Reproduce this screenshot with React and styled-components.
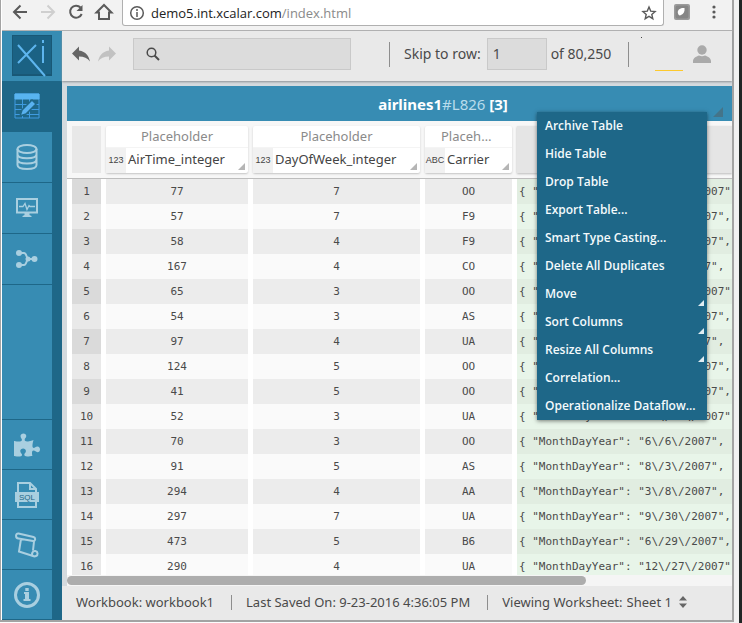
import React from "react";
import styled, { createGlobalStyle, css } from "styled-components";
import { FaPuzzlePiece } from "react-icons/fa";

const blue = "#378cb3";
const darkBlue = "#1e6788";
const ui = '"Noto Sans", "Open Sans", sans-serif';
const mono = '"DejaVu Sans Mono", "Liberation Mono", monospace';

const GlobalStyle = createGlobalStyle`
  *, *::before, *::after { box-sizing: border-box; }
  body { margin: 0; background: #fdfdfd; color: #4a4a4a; font: 13px/20px ${ui}; }
  button, input, select { font: inherit; color: inherit; margin: 0; padding: 0; border: 0; background: none; }
  svg { display: block; flex: none; }
`;

const Desktop = styled.div`
  display: flex;
  height: 100vh;
  overflow: hidden;
  background: #202625;
`;
const Window = styled.div`
  flex: 1;
  min-width: 0;
  display: flex;
  flex-direction: column;
  margin-right: 3px;
  padding: 0 5px 1px 0;
  background: linear-gradient(to right, #fdfdfd 60%, #f1f1f1);
`;
const Frame = styled.div`
  flex: 1;
  min-height: 0;
  display: flex;
  flex-direction: column;
  border: solid #a3a3a3;
  border-width: 0 2px 2px 1px;
  padding-left: 1px;
  background: #fff;
`;

const BrowserBar = styled.header`
  flex: none;
  display: flex;
  align-items: flex-start;
  height: 31px;
  background: #f2f2f2;
  border-bottom: 1px solid #b3b3b3;
  color: #5a5a5a;
`;
const BrowserButtons = styled.div`
  display: flex;
  gap: 8px;
  padding: 2px 8px 0 8px;
`;
const BrowserButton = styled.button`
  width: 20px;
  height: 20px;
  color: ${(p) => (p.disabled ? "#cfcfcf" : "#5a5a5a")};
`;
const AddressBar = styled.div`
  flex: 1;
  display: flex;
  align-items: center;
  gap: 6px;
  height: 26px;
  padding: 0 6px;
  background: #fff;
  border: solid #b0b0b0;
  border-width: 0 1px 1px;
  border-radius: 0 0 3px 3px;
`;
const Url = styled.span`
  flex: 1;
  font-family: "Open Sans", sans-serif;
  color: #8a8a8a;
  b { font-weight: 400; color: #222; }
`;
const Extensions = styled.div`
  display: flex;
  align-items: center;
  gap: 14px;
  height: 24px;
  padding: 0 8px 0 10px;
`;

const AppShell = styled.div`
  flex: 1;
  min-height: 0;
  display: flex;
`;
const Sidebar = styled.nav`
  flex: none;
  width: 60px;
  display: flex;
  flex-direction: column;
  background: linear-gradient(to right, ${blue} 50px, ${darkBlue} 50px);
`;
const Logo = styled.div`
  height: 50px;
  padding: 4px 10px;
  background: ${blue};
`;
const Tab = styled.button`
  display: flex;
  align-items: center;
  justify-content: center;
  height: ${(p) => (p.$compact ? 50 : 51)}px;
  padding-right: 10px;
  color: #a9cfe0;
  border-bottom: 1px solid ${darkBlue};
  ${(p) => p.$active && css`background: ${darkBlue}; color: #58b4f0;`}
`;
const TabGroup = styled.div`
  display: flex;
  flex-direction: column;
  ${(p) => p.$bottom && css`margin-top: auto; border-top: 1px solid ${darkBlue};`}
`;

const Content = styled.div`
  flex: 1;
  min-width: 0;
  display: flex;
  flex-direction: column;
  background: #d4dade;
`;
const TopBar = styled.div`
  flex: none;
  display: flex;
  align-items: center;
  height: 50px;
  padding: 0 21px 4px 10px;
  font-size: 14px;
  background: #e9e9e9;
  box-shadow: 0 1px 2px #8d9296;
  white-space: nowrap;
`;
const History = styled.div`
  display: flex;
  gap: 8px;
  margin-right: 17px;
`;
const HistoryButton = styled.button`
  height: 16px;
  color: ${(p) => (p.disabled ? "#c2c2c2" : "#666")};
`;
const Field = styled.div`
  display: flex;
  align-items: center;
  width: ${(p) => p.$width}px;
  height: 32px;
  padding: 0 5px;
  background: #dcdcdc;
  border: 1px solid #c9c9c9;
  input { flex: 1; min-width: 0; outline: 0; }
`;
const SearchField = styled(Field)`
  gap: 10px;
  padding-left: 12px;
`;
const Divider = styled.span`
  width: 1px;
  height: ${(p) => p.$height}px;
  margin: 0 14px 0 17px;
  background: #8e8e8e;
`;
const SkipForm = styled.div`
  display: flex;
  align-items: center;
  gap: 4px;
  padding-left: 38px;
  label {
    display: flex;
    align-items: center;
    gap: 14px;
    margin-right: 2px;
  }
  label::before {
    content: "";
    width: 1px;
    height: 25px;
    background: #8e8e8e;
  }
`;
const Gauge = styled.div`
  position: relative;
  width: 28px;
  height: 34px;
  margin-left: 12px;
  border-bottom: 1px solid #fdc92d;
  &::before {
    content: "";
    position: absolute;
    left: -14px;
    top: 0;
    width: 1px;
    height: 1px;
    background: #444;
  }
`;
const UserButton = styled.button`
  margin-left: auto;
  color: #aaa;
`;

const TablePanel = styled.section`
  flex: 1;
  min-height: 0;
  display: flex;
  flex-direction: column;
  margin: 5px 0 0 5px;
`;
const TitleBar = styled.div`
  position: relative;
  flex: none;
  z-index: 1;
  height: 35px;
  padding-left: 87px;
  text-align: center;
  font-size: 15px;
  line-height: 37px;
  color: #fff;
  background: ${blue};
  span { color: #b9dcec; }
`;
const Corner = styled.button`
  position: absolute;
  right: ${(p) => p.$inset}px;
  bottom: ${(p) => p.$bottom}px;
  width: ${(p) => p.$size}px;
  height: ${(p) => p.$size}px;
  background: ${(p) => p.$color};
  clip-path: polygon(100% 0, 100% 100%, 0 100%);
`;
const Menu = styled.ul`
  position: absolute;
  top: 26px;
  right: 25px;
  width: 170px;
  margin: 0;
  padding: 0;
  list-style: none;
  background: ${darkBlue};
  box-shadow: 0 1px 4px rgba(0, 0, 0, 0.5);
`;
const MenuItem = styled.li`
  position: relative;
  height: 28px;
  button:first-child {
    display: block;
    width: 100%;
    height: 28px;
    padding-left: 8px;
    text-align: left;
    font-family: "Open Sans", sans-serif;
    font-size: 12px;
    line-height: 28px;
    font-weight: 600;
    color: #f4fafc;
    white-space: nowrap;
  }
`;

const TableViewport = styled.div`
  flex: 1;
  min-height: 0;
  overflow: hidden;
  background: #fff;
`;
const DataTable = styled.table`
  table-layout: fixed;
  width: 100%;
  min-width: 665px;
  border-collapse: separate;
  border-spacing: 0;
`;
const Column = styled.col`
  width: ${(p) => (p.$width ? p.$width + "px" : "auto")};
`;
const HeadCell = styled.th`
  height: 58px;
  padding: ${(p) => (p.$first ? "5px 5px 5px 5px" : p.$last ? "5px 0" : "5px 5px 5px 0")};
  vertical-align: top;
  font-weight: 400;
  background: #f7f7f7;
  border-bottom: 1px solid #bdbdbd;
`;
const HeadBlank = styled.div`
  height: 47px;
  background: #e8e8e8;
  ${(p) => p.$raised && css`box-shadow: 0 1px 2px #bbb; background: #e5e5e5;`}
`;
const ColumnHead = styled.div`
  position: relative;
  background: #fff;
  border-radius: 2px;
  box-shadow: 0 1px 2px #c4c4c4;
`;
const Prefix = styled.div`
  height: 21px;
  line-height: 21px;
  padding: 0 16px;
  overflow: hidden;
  text-overflow: ellipsis;
  white-space: nowrap;
  color: #8a8a8a;
`;
const ColumnName = styled.div`
  display: flex;
  height: 26px;
  line-height: 22px;
  color: #444;
  border-top: 1px solid #f4f4f4;
`;
const TypeTag = styled.span`
  width: 20px;
  margin-right: 2px;
  text-align: center;
  font-family: "Liberation Sans", sans-serif;
  font-size: 9px;
  line-height: 25px;
  background: #f1f1f1;
`;

const Row = styled.tr`
  td, th { background: ${(p) => (p.$odd ? "#ececec" : "#fafafa")}; }
  th { background: ${(p) => (p.$odd ? "#dadada" : "#e9e9e9")}; }
  td:last-child { background: ${(p) => (p.$odd ? "#e1ede1" : "#e8f5e9")}; }
`;
const cell = css`
  height: 25px;
  padding: 0;
  line-height: 25px;
  font-family: ${mono};
  font-size: 11px;
  font-weight: 400;
  text-align: center;
  border-right: 5px solid #fff;
`;
const RowNumber = styled.th`
  ${cell}
  border-left: 5px solid #fff;
`;
const Cell = styled.td`${cell}`;
const JsonCell = styled.td`
  ${cell}
  padding-left: 2px;
  text-align: left;
  white-space: pre;
  overflow: hidden;
  border-right: 0;
`;

const ScrollTrack = styled.div`
  flex: none;
  height: 11px;
  padding: 1px 0;
  background: #f5f5f5;
`;
const ScrollThumb = styled.div`
  width: 78%;
  height: 9px;
  border-radius: 5px;
  background: #adadad;
`;
const StatusBar = styled.footer`
  flex: none;
  display: flex;
  align-items: center;
  height: 34px;
  padding: 0 0 2px 14px;
  background: #e9e9e9;
  white-space: nowrap;
`;
const SheetPicker = styled.label`
  display: flex;
  align-items: center;
  gap: 4px;
  select { appearance: none; width: 48px; }
`;

const stroke = (w) => ({ fill: "none", stroke: "currentColor", strokeWidth: w });

const BackIcon = ({ flip }) => (
  <svg width="20" height="20" viewBox="0 0 20 20" {...stroke(2)} transform={flip ? "scale(-1 1)" : undefined}>
    <path d="M17 10H4M10.500 3.500L4 10l6.500 6.500" />
  </svg>
);
const ReloadIcon = () => (
  <svg width="20" height="20" viewBox="0 0 20 20" {...stroke(2)}>
    <path d="M14.500 5.500A6 6 0 1 0 15.700 12" />
    <path d="M16.500 3v6h-6z" fill="currentColor" stroke="none" />
  </svg>
);
const HomeIcon = () => (
  <svg width="20" height="20" viewBox="0 0 20 20" {...stroke(2)}>
    <path d="M2.500 10.500L10 3l7.500 7.500H15V17H5v-6.500z" />
  </svg>
);
const InfoIcon = () => (
  <svg width="16" height="16" viewBox="0 0 16 16" {...stroke(1.5)}>
    <circle cx="8" cy="8" r="6.300" />
    <path d="M8 7v5M8 4v2" />
  </svg>
);
const StarIcon = () => (
  <svg width="16" height="16" viewBox="0 0 16 16" {...stroke(1.4)}>
    <path d="M8 2l1.700 4.100 4.400.4-3.300 2.900 1 4.300L8 11.400l-3.800 2.300 1-4.300-3.300-2.900 4.400-.4z" />
  </svg>
);
const ExtensionIcon = () => (
  <svg width="16" height="16" viewBox="0 0 16 16">
    <rect width="16" height="16" rx="2" fill="#9b9b9b" />
    <rect x="1.500" y="1.500" width="13" height="13" rx="2" fill="#868686" />
    <path d="M10.500 4C6 3.500 3 6 4 9.500c.5 2 2 2.500 3 1.500 2.500-1 4-3.500 3.500-7z" fill="#fff" />
  </svg>
);
const DotsIcon = () => (
  <svg width="20" height="16" viewBox="0 0 20 16" fill="#5a5a5a">
    <circle cx="10" cy="3" r="1.600" /><circle cx="10" cy="8" r="1.600" /><circle cx="10" cy="13" r="1.600" />
  </svg>
);
const LogoIcon = () => (
  <svg width="40" height="42" viewBox="0 0 40 42" fill="none" stroke="#5eb5ee" strokeWidth="2">
    <rect width="40" height="40" fill="#1b6284" stroke="#195876" />
    <path d="M6 10l27 31M24 10L6 28M31 11v17M31 5v3" />
  </svg>
);
const TableIcon = () => (
  <svg width="26" height="26" viewBox="0 0 26 26" {...stroke(1)}>
    <path d="M1 1h24v24H1zM8.500 6v19M15.500 6v19M1 11.500h24M1 16.500h24M1 21.500h24" stroke="#3f9be0" />
    <path d="M1 1h24v5H1z" fill="currentColor" />
    <path d="M6 23l2-6L18 7l4 4-10 10z" fill="#59b1ef" stroke={darkBlue} strokeWidth="1.500" />
  </svg>
);
const DatabaseIcon = () => (
  <svg width="22" height="26" viewBox="0 0 22 26" {...stroke(2)}>
    <ellipse cx="11" cy="5" rx="9.500" ry="4" />
    <path d="M1.500 5v16c0 5.300 19 5.300 19 0V5M1.500 10.300c0 5.300 19 5.300 19 0M1.500 15.600c0 5.300 19 5.300 19 0" />
  </svg>
);
const MonitorIcon = () => (
  <svg width="22" height="20" viewBox="0 0 22 20" {...stroke(2)}>
    <path d="M1 1h20v13.500H1z" />
    <path d="M3 8.500h4l2-3 2 6 2-4 1 1h5" strokeWidth="1.300" />
    <path d="M8.500 15h5v2l2 1v1h-9v-1l2-1z" fill="currentColor" stroke="none" />
  </svg>
);
const FlowIcon = () => (
  <svg width="22" height="18" viewBox="0 0 22 18" {...stroke(2)}>
    <path d="M3 3h5c3 0 2 6 5 6h6M3 15h5c3 0 2-6 5-6" />
    <g fill="currentColor" stroke="none">
      <circle cx="3" cy="3" r="3" /><circle cx="3" cy="15" r="3" /><circle cx="12" cy="9" r="2.500" /><circle cx="18.500" cy="9" r="3" />
    </g>
  </svg>
);
const SqlIcon = () => (
  <svg width="24" height="26" viewBox="0 0 24 26">
    <path d="M3 10V1h12l6 6v3M3 20v5h18v-5M15 1v6h6" {...stroke(2)} />
    <rect y="10" width="24" height="10" fill="currentColor" />
    <text x="12" y="18" textAnchor="middle" fontFamily="Liberation Sans" fontSize="8" fill={darkBlue}>SQL</text>
  </svg>
);
const ScrollIcon = () => (
  <svg width="24" height="26" viewBox="0 0 24 26" {...stroke(2)}>
    <path d="M3.500 1.500l15 3.500c2.500.8 2 4.500-.5 4L3.500 6.500C0 6 .5 1 3.500 1.500zM6 7L4 19.500l14 4.500M19 9.500L18 18.500" />
    <path d="M18 24c-2-1.500-.5-5.500 2.300-5s3 4 .7 5c-1 .5-2 .5-3 0z" />
  </svg>
);
const BigInfoIcon = () => (
  <svg width="26" height="26" viewBox="0 0 26 26">
    <circle cx="13" cy="13" r="11.500" {...stroke(3)} />
    <path d="M10 10h5v7h1.500v2h-7v-2H11v-5h-1zM11.300 6h3.400v3h-3.400z" fill="currentColor" />
  </svg>
);
const ReplyIcon = ({ flip }) => (
  <svg width="18" height="16" viewBox="3 5 18 15" fill="currentColor" transform={flip ? "scale(-1 1)" : undefined}>
    <path d="M10 9V5l-7 7 7 7v-4.100c5 0 8.500 1.600 11 5.100-1-5-4-10-11-11z" />
  </svg>
);
const SearchIcon = () => (
  <svg width="14" height="14" viewBox="0 0 14 14" {...stroke(1.5)}>
    <circle cx="5.500" cy="5.500" r="4.300" /><path d="M8.500 8.500l4.500 4.500" strokeWidth="2" />
  </svg>
);
const UserIcon = () => (
  <svg width="18" height="18" viewBox="0 0 18 18" fill="currentColor">
    <circle cx="9" cy="5" r="4.700" /><path d="M0 18v-2c0-3 4-5 6-5.500 2 1 4 1 6 0 2 .5 6 2.500 6 5.500v2z" />
  </svg>
);
const SortIcon = () => (
  <svg width="8" height="12" viewBox="0 0 8 12" fill="#666">
    <path d="M4 0l4 4.500H0zM4 12l4-4.500H0z" />
  </svg>
);

const menuItems = [
  ["Archive Table"], ["Hide Table"], ["Drop Table"], ["Export Table..."], ["Smart Type Casting…"],
  ["Delete All Duplicates"], ["Move", true], ["Sort Columns", true], ["Resize All Columns", true],
  ["Correlation..."], ["Operationalize Dataflow..."],
];
const columns = [
  { name: "AirTime_integer", type: "123" },
  { name: "DayOfWeek_integer", type: "123" },
  { name: "Carrier", type: "ABC" },
];
const rows = [
  [77, 7, "OO", "10/28/2007"], [57, 7, "F9", "9/30/2007"], [58, 4, "F9", "6/28/2007"], [167, 4, "CO", "3/8/2007"],
  [65, 3, "OO", "10/24/2007"], [54, 3, "AS", "6/27/2007"], [97, 4, "UA", "3/8/2007"], [124, 5, "OO", "6/29/2007"],
  [41, 5, "OO", "6/29/2007"], [52, 3, "UA", "10/24/2007"], [70, 3, "OO", "6/6/2007"], [91, 5, "AS", "8/3/2007"],
  [294, 4, "AA", "3/8/2007"], [297, 7, "UA", "9/30/2007"], [473, 5, "B6", "6/29/2007"], [290, 4, "UA", "12/27/2007"],
];
const toJson = (date) => `{ "MonthDayYear": "${date.replaceAll("/", "\\/")}", "DayOfWeek"`;

export default function App() {
  return (
    <Desktop>
      <GlobalStyle />
      <Window>
        <Frame>
          <BrowserBar>
            <BrowserButtons>
              <BrowserButton aria-label="Back"><BackIcon /></BrowserButton>
              <BrowserButton aria-label="Forward" disabled><BackIcon flip /></BrowserButton>
              <BrowserButton aria-label="Reload"><ReloadIcon /></BrowserButton>
              <BrowserButton aria-label="Home"><HomeIcon /></BrowserButton>
            </BrowserButtons>
            <AddressBar>
              <InfoIcon />
              <Url><b>demo5.int.xcalar.com</b>/index.html</Url>
              <StarIcon />
            </AddressBar>
            <Extensions><ExtensionIcon /><DotsIcon /></Extensions>
          </BrowserBar>
          <AppShell>
            <Sidebar>
              <Logo><LogoIcon /></Logo>
              <TabGroup>
                <Tab $active aria-label="Worksheets"><TableIcon /></Tab>
                <Tab aria-label="Datasets"><DatabaseIcon /></Tab>
                <Tab aria-label="Monitor"><MonitorIcon /></Tab>
                <Tab aria-label="Dataflows"><FlowIcon /></Tab>
              </TabGroup>
              <TabGroup $bottom>
                <Tab $compact aria-label="Extensions"><FaPuzzlePiece size={26} /></Tab>
                <Tab $compact aria-label="SQL"><SqlIcon /></Tab>
                <Tab $compact aria-label="Scripts"><ScrollIcon /></Tab>
                <Tab $compact aria-label="Help"><BigInfoIcon /></Tab>
              </TabGroup>
            </Sidebar>
            <Content>
              <TopBar>
                <History>
                  <HistoryButton aria-label="Undo"><ReplyIcon /></HistoryButton>
                  <HistoryButton aria-label="Redo" disabled><ReplyIcon flip /></HistoryButton>
                </History>
                <SearchField $width={218}><SearchIcon /><input aria-label="Search" /></SearchField>
                <SkipForm>
                  <label htmlFor="skip-row">Skip to row:</label>
                  <Field $width={60}><input id="skip-row" defaultValue="1" /></Field>
                  <span>of 80,250</span>
                </SkipForm>
                <Divider $height={25} />
                <Gauge />
                <UserButton aria-label="User"><UserIcon /></UserButton>
              </TopBar>
              <TablePanel>
                <TitleBar>
                  <b>airlines1</b><span>#L826</span> <b>[3]</b>
                  <Corner aria-label="Table menu" $inset={9} $bottom={4} $size={10} $color="#447489" />
                  <Menu>
                    {menuItems.map(([label, sub]) => (
                      <MenuItem key={label}>
                        <button>{label}</button>
                        {sub && <Corner as="i" $inset={3} $bottom={2} $size={6} $color="#e0edf3" />}
                      </MenuItem>
                    ))}
                  </Menu>
                </TitleBar>
                <TableViewport>
                  <DataTable>
                    <colgroup>
                      <Column $width={39} /><Column $width={147} /><Column $width={172} /><Column $width={92} /><Column />
                    </colgroup>
                    <thead>
                      <tr>
                        <HeadCell $first><HeadBlank /></HeadCell>
                        {columns.map((c) => (
                          <HeadCell key={c.name}>
                            <ColumnHead>
                              <Prefix>Placeholder</Prefix>
                              <ColumnName><TypeTag>{c.type}</TypeTag>{c.name}</ColumnName>
                              <Corner aria-label={`${c.name} menu`} $inset={3} $bottom={3} $size={7} $color="#b5b5b5" />
                            </ColumnHead>
                          </HeadCell>
                        ))}
                        <HeadCell $last><HeadBlank $raised /></HeadCell>
                      </tr>
                    </thead>
                    <tbody>
                      {rows.map(([time, day, carrier, date], i) => (
                        <Row key={i} $odd={i % 2 === 0}>
                          <RowNumber>{i + 1}</RowNumber>
                          <Cell>{time}</Cell>
                          <Cell>{day}</Cell>
                          <Cell>{carrier}</Cell>
                          <JsonCell>{toJson(date)}</JsonCell>
                        </Row>
                      ))}
                    </tbody>
                  </DataTable>
                </TableViewport>
                <ScrollTrack><ScrollThumb /></ScrollTrack>
              </TablePanel>
              <StatusBar>
                <span>Workbook: workbook1</span>
                <Divider $height={15} />
                <span>Last Saved On: 9-23-2016 4:36:05 PM</span>
                <Divider $height={15} />
                <SheetPicker>
                  Viewing Worksheet:
                  <select defaultValue="Sheet 1"><option>Sheet 1</option></select>
                  <SortIcon />
                </SheetPicker>
              </StatusBar>
            </Content>
          </AppShell>
        </Frame>
      </Window>
    </Desktop>
  );
}
